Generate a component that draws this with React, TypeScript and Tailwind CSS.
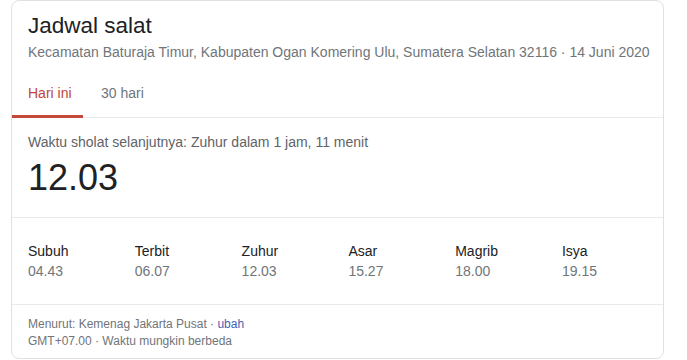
import React from "react";

const prayers = [
  ["Subuh", "04.43"],
  ["Terbit", "06.07"],
  ["Zuhur", "12.03"],
  ["Asar", "15.27"],
  ["Magrib", "18.00"],
  ["Isya", "19.15"],
];

export default function App() {
  return (
    <div className="w-[687px] h-[360px] bg-white overflow-hidden" style={{ fontFamily: '"Liberation Sans", Arial, sans-serif' }}>
      <div className="ml-[11px] w-[653px] h-[359px] border border-[#dfe1e5] rounded-[8px] flex flex-col">
        <div className="px-4 pt-[11px]">
          <div className="text-[22.5px] leading-[28px] text-[#202124]">Jadwal salat</div>
          <div className="mt-[2px] text-[14px] leading-[20px] text-[#70757a] whitespace-nowrap">
            Kecamatan Baturaja Timur, Kabupaten Ogan Komering Ulu, Sumatera Selatan 32116 · 14 Juni 2020
          </div>
        </div>
        <div className="mt-[21px] flex border-b border-[#e8eaed]">
          <div className="w-[71px] pl-4 pb-[12px] border-b-[3px] border-[#c5483a] mb-[-1px] text-[14px] leading-[20px] text-[#c0463a]">
            Hari ini
          </div>
          <div className="ml-[18px] pb-[12px] text-[14px] leading-[20px] text-[#70757a]">30 hari</div>
        </div>
        <div className="px-4 pt-[14px] pb-[19px] border-b border-[#e8eaed]">
          <div className="text-[14px] leading-[20px] text-[#5f6368]">
            Waktu sholat selanjutnya: Zuhur dalam 1 jam, 11 menit
          </div>
          <div className="mt-[6px] text-[36px] leading-[40px] text-[#202124]">12.03</div>
        </div>
        <div className="px-4 pt-[23px] pb-[23px] flex border-b border-[#e8eaed]">
          {prayers.map(([n, t]) => (
            <div key={n} className="w-[106.8px] shrink-0">
              <div className="text-[14px] leading-[20px] text-[#202124]">{n}</div>
              <div className="text-[14px] leading-[20px] text-[#70757a]">{t}</div>
            </div>
          ))}
        </div>
        <div className="px-4 pt-[11px] text-[12px] leading-[17px] text-[#70757a]">
          <div>
            Menurut: Kemenag Jakarta Pusat · <span className="text-[#3f64b5]">ubah</span>
          </div>
          <div>GMT+07.00 · Waktu mungkin berbeda</div>
        </div>
      </div>
    </div>
  );
}
